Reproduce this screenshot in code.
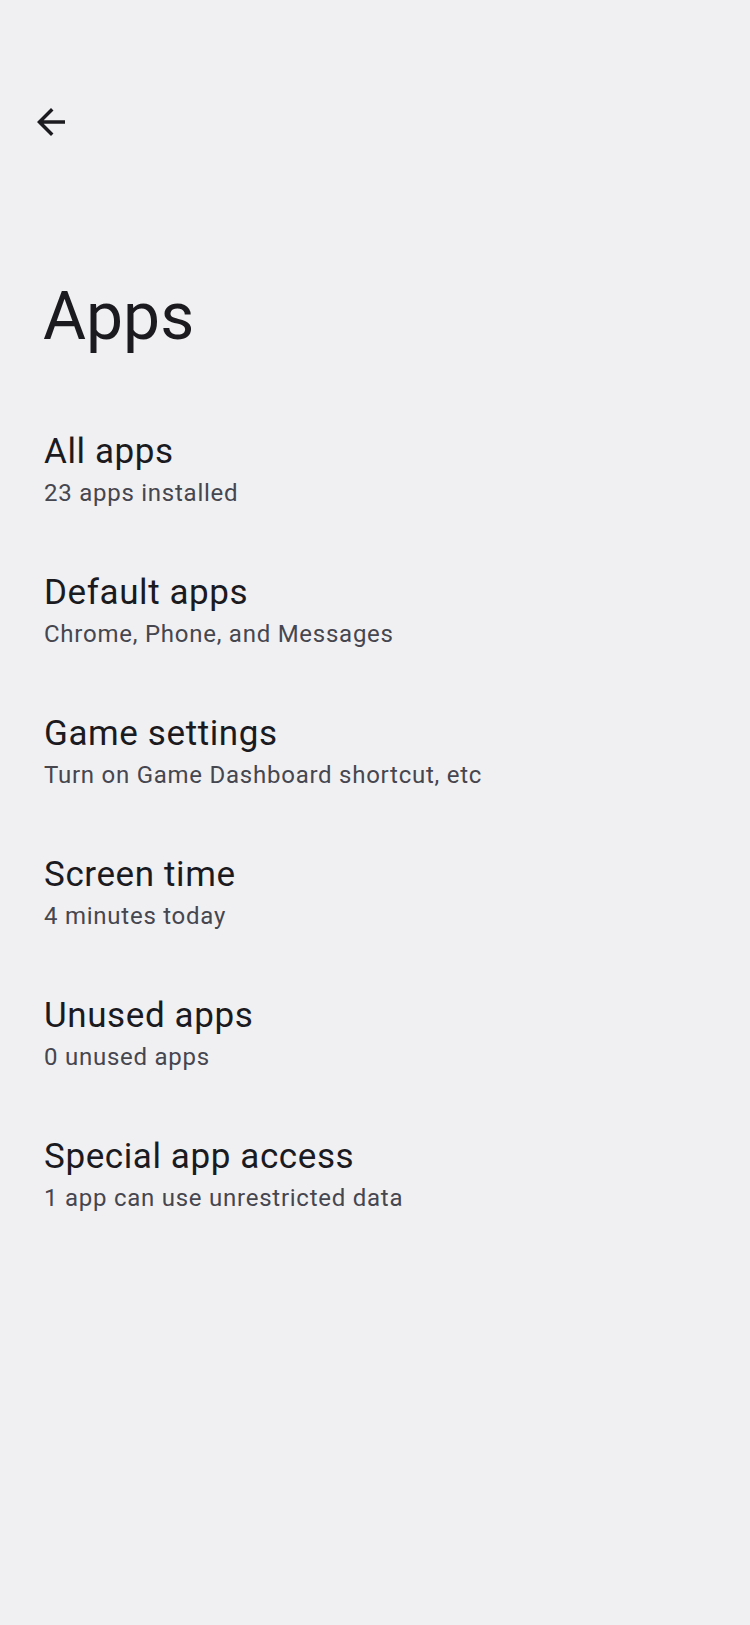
import React from 'react';

const items = [
  { title: 'All apps', summary: '23 apps installed' },
  { title: 'Default apps', summary: 'Chrome, Phone, and Messages' },
  { title: 'Game settings', summary: 'Turn on Game Dashboard shortcut, etc' },
  { title: 'Screen time', summary: '4 minutes today' },
  { title: 'Unused apps', summary: '0 unused apps' },
  { title: 'Special app access', summary: '1 app can use unrestricted data' },
];

function BackArrow() {
  return (
    <svg viewBox="0 0 24 24" className="w-[42px] h-[42px]" fill="#1b1b1f">
      <path d="M20 11H7.83l5.59-5.59L12 4l-8 8 8 8 1.41-1.41L7.83 13H20v-2z" />
    </svg>
  );
}

export default function App() {
  return (
    <div className="min-h-[1625px] w-[750px] bg-[#f0f0f3] font-['Roboto',sans-serif] text-[#1b1b1f]">
      {/* Toolbar */}
      <div className="pt-[101px] pl-[30px]">
        <button className="block">
          <BackArrow />
        </button>
      </div>

      {/* Collapsing title */}
      <h1 className="mt-[134px] pl-[43px] text-[66px] leading-[80px] font-normal">Apps</h1>

      {/* Preference list */}
      <ul className="mt-[42px]">
        {items.map((item) => (
          <li key={item.title} className="px-[44px] py-[31px]">
            <div className="text-[35px] leading-[44px] tracking-[0.6px]">{item.title}</div>
            <div className="mt-[3px] text-[24px] leading-[32px] tracking-[0.75px] text-[#46464f]">
              {item.summary}
            </div>
          </li>
        ))}
      </ul>
    </div>
  );
}
